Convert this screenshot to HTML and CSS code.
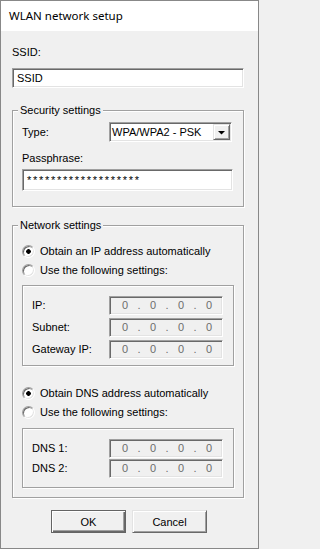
FILE: index.html
```html
<!DOCTYPE html>
<html>
<head>
<meta charset="utf-8">
<title>WLAN network setup</title>
<link rel="stylesheet" href="styles.css">
</head>
<body>
<div class="window">
  <div class="titlebar">WLAN network setup</div>
  <div class="content">
    <div class="label ssid-label">SSID:</div>
    <div class="sunken textbox ssid-box">SSID</div>

    <div class="group security">
      <div class="group-title">Security settings</div>
      <div class="type-row">
        <span class="row-label">Type:</span>
        <div class="sunken combo">
          <span class="combo-text">WPA/WPA2 - PSK</span>
          <span class="raised combo-btn">
            <svg width="7" height="4" viewBox="0 0 7 4"><polygon points="0,0 7,0 3.5,3.5" fill="#000"/></svg>
          </span>
        </div>
      </div>
      <div class="label pass-label">Passphrase:</div>
      <div class="sunken textbox pass-box">*******************</div>
    </div>

    <div class="group network">
      <div class="group-title">Network settings</div>
      <div class="radio-row ip-auto"><span class="radio checked"></span><span>Obtain an IP address automatically</span></div>
      <div class="radio-row second"><span class="radio"></span><span>Use the following settings:</span></div>
      <div class="etched ipbox">
        <div class="ip-row"><span class="ip-label">IP:</span><div class="sunken ipfield"><span>0</span><span>.</span><span>0</span><span>.</span><span>0</span><span>.</span><span>0</span></div></div>
        <div class="ip-row"><span class="ip-label">Subnet:</span><div class="sunken ipfield"><span>0</span><span>.</span><span>0</span><span>.</span><span>0</span><span>.</span><span>0</span></div></div>
        <div class="ip-row"><span class="ip-label">Gateway IP:</span><div class="sunken ipfield"><span>0</span><span>.</span><span>0</span><span>.</span><span>0</span><span>.</span><span>0</span></div></div>
      </div>
      <div class="radio-row dns-auto"><span class="radio checked"></span><span>Obtain DNS address automatically</span></div>
      <div class="radio-row second"><span class="radio"></span><span>Use the following settings:</span></div>
      <div class="etched dnsbox">
        <div class="ip-row"><span class="ip-label">DNS 1:</span><div class="sunken ipfield"><span>0</span><span>.</span><span>0</span><span>.</span><span>0</span><span>.</span><span>0</span></div></div>
        <div class="ip-row"><span class="ip-label">DNS 2:</span><div class="sunken ipfield"><span>0</span><span>.</span><span>0</span><span>.</span><span>0</span><span>.</span><span>0</span></div></div>
      </div>
    </div>

    <div class="buttons">
      <button class="btn default">OK</button>
      <button class="btn raised">Cancel</button>
    </div>
  </div>
</div>
</body>
</html>
```

FILE: styles.css
```css
* { box-sizing: border-box; }
html, body { margin: 0; padding: 0; }
body {
  width: 259px;
  height: 549px;
  background: #f0f0f0;
  font-family: "Liberation Sans", Arial, sans-serif;
  font-size: 11px;
  color: #000;
}
.window {
  width: 259px;
  height: 549px;
  border: 1px solid #888888;
  background: #f0f0f0;
  display: flex;
  flex-direction: column;
}
.titlebar {
  flex: none;
  height: 30px;
  background: #fff;
  padding-left: 8px;
  font-family: "Noto Sans", sans-serif;
  font-size: 11.5px;
  line-height: 30px;
  color: #000;
}
.content {
  display: flex;
  flex-direction: column;
  padding: 0 14px 0 11px;
}
.label { height: 13px; line-height: 13px; }
.ssid-label { margin-top: 15px; }

.sunken {
  border: 1px solid;
  border-color: #a0a0a0 #ffffff #ffffff #a0a0a0;
  box-shadow: inset 1px 1px 0 #696969, inset -1px -1px 0 #e3e3e3;
  background: #fff;
}
.raised {
  border: 1px solid;
  border-color: #e3e3e3 #696969 #696969 #e3e3e3;
  box-shadow: inset 1px 1px 0 #ffffff, inset -1px -1px 0 #a0a0a0;
  background: #f0f0f0;
}
.etched {
  border: 1px solid #a0a0a0;
  box-shadow: inset 1px 1px 0 #fff, 1px 1px 0 #fff;
}
.textbox {
  display: flex;
  align-items: center;
  padding-left: 4px;
  line-height: 13px;
}
.ssid-box { margin-top: 9px; width: 232px; height: 20px; }

.group {
  border: 1px solid #a0a0a0;
  box-shadow: inset 1px 1px 0 #fff, 1px 1px 0 #fff;
  display: flex;
  flex-direction: column;
  padding: 0 9px;
  width: 232px;
}
.group-title {
  align-self: flex-start;
  margin: -7px 0 0 -4px;
  padding: 0 2px;
  height: 13px;
  line-height: 13px;
  background: #f0f0f0;
}
.security { margin-top: 22px; height: 97px; }
.type-row {
  margin-top: 5px;
  height: 20px;
  display: flex;
  align-items: center;
}
.row-label { width: 87px; line-height: 13px; }
.combo {
  width: 123px;
  height: 20px;
  padding: 1px;
  display: flex;
  align-items: center;
}
.combo-text { padding-left: 1px; line-height: 13px; }
.combo-btn {
  margin-left: auto;
  width: 17px;
  height: 16px;
  display: flex;
  align-items: center;
  justify-content: center;
}
.combo-btn svg { display: block; margin-top: 1px; }
.pass-label { margin-top: 10px; }
.pass-box {
  margin-top: 4px;
  width: 211px;
  height: 22px;
  letter-spacing: 1.7px;
}

.network { margin-top: 18px; height: 273px; }
.radio-row {
  display: flex;
  align-items: center;
  gap: 5px;
  height: 13px;
  line-height: 13px;
}
.ip-auto { margin-top: 13px; }
.dns-auto { margin-top: 21px; }
.second { margin-top: 6px; }
.radio {
  flex: none;
  width: 13px;
  height: 13px;
  border-radius: 50%;
  border: 1px solid;
  border-color: #a0a0a0 #ffffff #ffffff #a0a0a0;
  box-shadow: inset 1px 1px 0 #696969, inset -1px -1px 0 #e3e3e3;
  background: #fff;
}
.radio.checked {
  background: radial-gradient(circle at center, #000 0 2px, #fff 2.6px);
}
.ipbox {
  margin-top: 8px;
  height: 81px;
  padding: 10px 0 0 9px;
  display: flex;
  flex-direction: column;
  gap: 3px;
}
.dnsbox {
  margin-top: 9px;
  height: 60px;
  padding: 10px 0 0 9px;
  display: flex;
  flex-direction: column;
  gap: 1px;
}
.ip-row { display: flex; align-items: center; height: 19px; }
.ip-label { width: 77px; line-height: 13px; }
.ipfield {
  width: 114px;
  height: 19px;
  background: #f0f0f0;
  color: #6d6d6d;
  display: flex;
  align-items: center;
  padding-left: 8px;
  line-height: 13px;
}
.ipfield span { width: 14px; text-align: center; }

.buttons {
  margin-top: 12px;
  padding-left: 39px;
  display: flex;
  gap: 6px;
}
.btn {
  appearance: none;
  margin: 0;
  width: 75px;
  height: 23px;
  padding: 0;
  font-family: "Liberation Sans", Arial, sans-serif;
  font-size: 11px;
  color: #000;
  background: #f0f0f0;
}
.btn.default {
  border: 1px solid #646464;
  box-shadow: inset 1px 1px 0 #ffffff, inset -1px -1px 0 #696969, inset -2px -2px 0 #a0a0a0;
}
```
